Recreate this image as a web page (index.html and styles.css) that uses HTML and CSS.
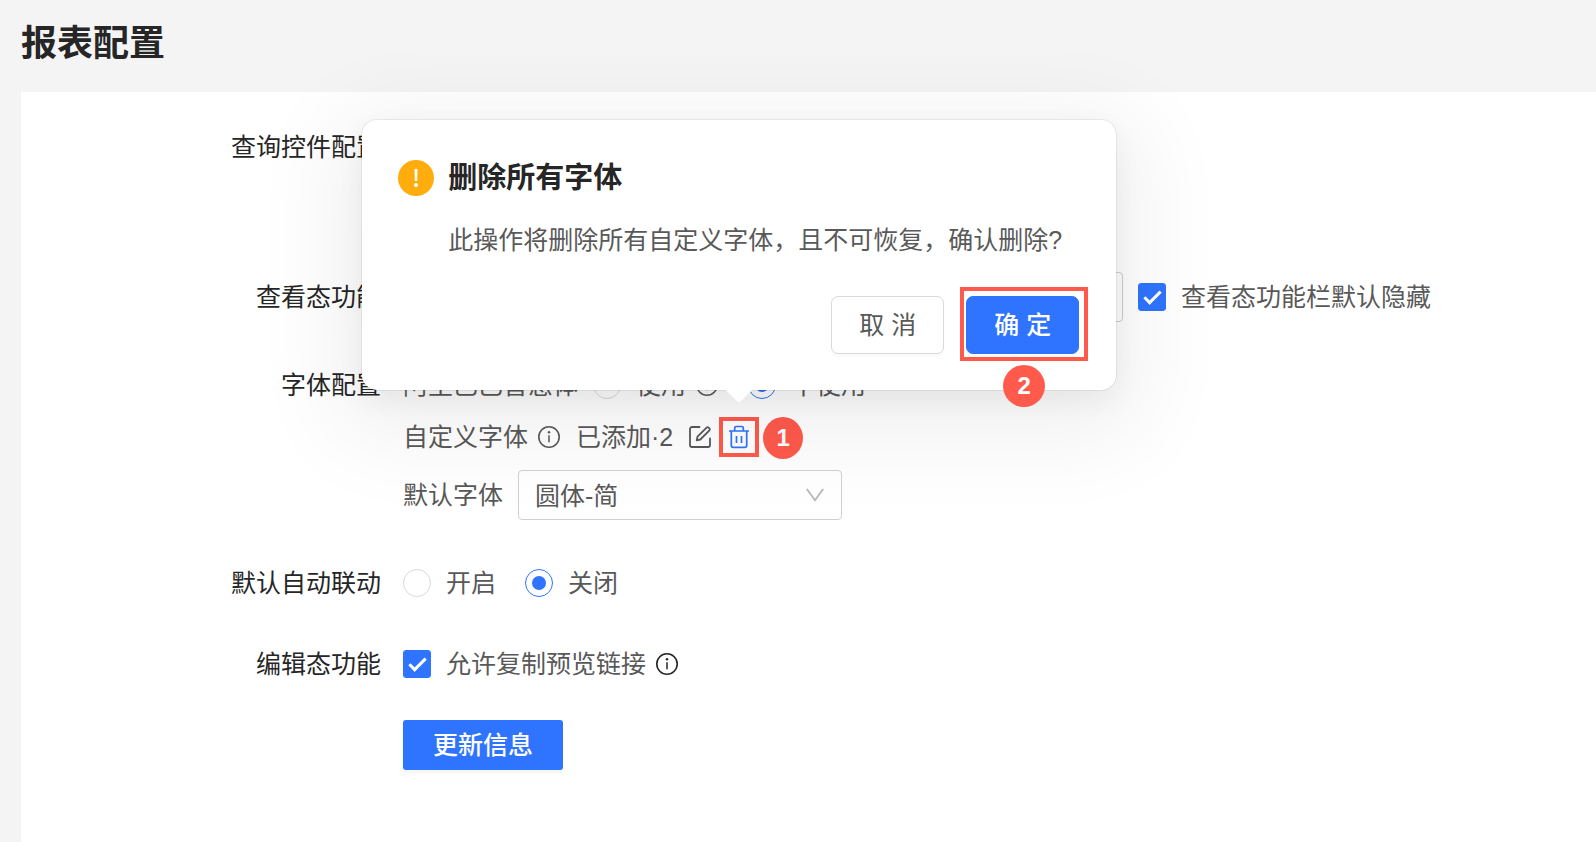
FILE: index.html
```html
<!DOCTYPE html>
<html lang="zh-CN">
<head>
<meta charset="utf-8">
<meta name="viewport" content="width=device-width, initial-scale=1">
<title>报表配置</title>
<link rel="stylesheet" href="styles.css">
</head>
<body>
<svg class="sprite" aria-hidden="true">
  <symbol id="icon-info" viewBox="0 0 24 24">
    <circle cx="12" cy="12" r="10.2" fill="none" stroke="currentColor" stroke-width="1.6"/>
    <path d="M12 10.3v7" fill="none" stroke="currentColor" stroke-width="1.5"/>
    <circle cx="12" cy="7.2" r="1.2" fill="currentColor"/>
  </symbol>
</svg>
<header class="page-header">
  <h1 class="page-title">报表配置</h1>
</header>
<main class="panel">
  <form class="form">
    <section class="row row-query">
      <h2 class="row-label">查询控件配置</h2>
      <div class="row-body"></div>
    </section>

    <section class="row row-spaced">
      <h2 class="row-label">查看态功能</h2>
      <div class="row-body">
        <div class="line line-wide">
          <input class="field view-field" type="text" aria-label="查看态功能">
          <label class="choice"><input class="checkbox" type="checkbox" checked>查看态功能栏默认隐藏</label>
        </div>
      </div>
    </section>

    <section class="row row-spaced">
      <h2 class="row-label">字体配置</h2>
      <div class="row-body">
        <div class="line">
          <span>阿里巴巴普惠体</span>
          <div class="choices">
            <span class="with-icon">
              <label class="choice"><input class="radio" type="radio" name="puhui">使用</label>
              <svg class="icon"><use href="#icon-info"/></svg>
            </span>
            <label class="choice"><input class="radio" type="radio" name="puhui" checked>不使用</label>
          </div>
        </div>
        <div class="line line-custom">
          <span class="with-icon">自定义字体<svg class="icon"><use href="#icon-info"/></svg></span>
          <span>已添加·2</span>
          <div class="actions">
            <button class="icon-button" type="button" aria-label="编辑">
              <svg class="icon" viewBox="0 0 24 24" fill="none" stroke="currentColor" stroke-width="1.8" stroke-linecap="round" stroke-linejoin="round">
                <path d="M11.5 2H4a2 2 0 0 0-2 2v16a2 2 0 0 0 2 2h16a2 2 0 0 0 2-2v-6.5"/>
                <path d="M9.5 11.7 18.6 2.6q1-.9 2 0l.8.8q.9 1 0 2l-9.1 9.1-3.6.8z"/>
              </svg>
            </button>
            <div class="trash marked">
              <button class="icon-button icon-button-active" type="button" aria-label="删除">
                <svg class="icon" viewBox="0 0 24 24" fill="none" stroke="currentColor" stroke-width="1.7" stroke-linejoin="round">
                  <path d="M2 6h20M7.700 6V3q0-1.500 1.500-1.500h5.600q1.500 0 1.500 1.500v3M4.300 6v14.500q0 1.800 1.800 1.800h11.800q1.800 0 1.800-1.800V6M9.500 11v7M14.500 11v7"/>
                </svg>
              </button>
              <div class="popover" role="dialog" aria-labelledby="confirm-title">
                <svg class="warning" viewBox="0 0 36 36" aria-hidden="true">
                  <circle cx="18" cy="18" r="18" fill="#ffad0d"/>
                  <path d="M16.500 9h3l-.3 12h-2.400z" fill="#fff"/>
                  <circle cx="18" cy="25" r="2" fill="#fff"/>
                </svg>
                <h3 id="confirm-title" class="popover-title">删除所有字体</h3>
                <p class="popover-text">此操作将删除所有自定义字体，且不可恢复，确认删除?</p>
                <div class="popover-actions">
                  <button class="button" type="button">取 消</button>
                  <div class="confirm">
                    <button class="button button-primary" type="button">确 定</button>
                    <span class="badge badge-below">2</span>
                  </div>
                </div>
              </div>
              <span class="badge badge-beside">1</span>
            </div>
          </div>
        </div>
        <div class="line line-select">
          <label for="default-font">默认字体</label>
          <div class="select">
            <select id="default-font" class="field select-field"><option>圆体-简</option></select>
            <svg class="chevron" viewBox="0 0 18 14" fill="none" stroke="currentColor" stroke-width="1.800"><path d="M.8 1 9 12.300 17.200 1"/></svg>
          </div>
        </div>
      </div>
    </section>

    <section class="row">
      <h2 class="row-label">默认自动联动</h2>
      <div class="row-body">
        <div class="line choices">
          <label class="choice"><input class="radio" type="radio" name="linkage">开启</label>
          <label class="choice"><input class="radio" type="radio" name="linkage" checked>关闭</label>
        </div>
      </div>
    </section>

    <section class="row">
      <h2 class="row-label">编辑态功能</h2>
      <div class="row-body">
        <div class="line">
          <span class="with-icon">
            <label class="choice"><input class="checkbox" type="checkbox" checked>允许复制预览链接</label>
            <svg class="icon icon-dark"><use href="#icon-info"/></svg>
          </span>
        </div>
      </div>
    </section>

    <div class="row">
      <button class="submit" type="submit">更新信息</button>
    </div>
  </form>
</main>
</body>
</html>
```
FILE: styles.css
```css
*,
*::before,
*::after {
  box-sizing: border-box;
}

body {
  margin: 0;
  min-height: 100vh;
  display: flex;
  flex-direction: column;
  overflow-x: hidden;
  background: #f4f4f4;
  color: #595959;
  font: 25px/50px "Liberation Sans", "Noto Sans CJK SC", sans-serif;
}

button,
input,
select {
  font: inherit;
  color: inherit;
  margin: 0;
}

h1,
h2,
h3,
p {
  margin: 0;
}

.sprite {
  display: none;
}

.page-header {
  padding: 17px 21px 21px;
}

.page-title {
  color: #262626;
  font-size: 36px;
  font-weight: 700;
  line-height: 54px;
}

.panel {
  flex: 1;
  margin-left: 21px;
  padding: 30px 0;
  background: #fff;
}

.form {
  display: flex;
  flex-direction: column;
  gap: 31px;
}

.row {
  display: grid;
  grid-template-columns: 360px 1fr;
  column-gap: 22px;
}

.row-query {
  min-height: 119px;
}

.row-spaced {
  margin-bottom: 7px;
}

.row-label {
  color: #262626;
  font-size: 25px;
  font-weight: 400;
  text-align: right;
}

.line {
  display: flex;
  align-items: center;
  gap: 15px;
  min-height: 50px;
  white-space: nowrap;
}

.line-custom {
  min-height: 54px;
}

.line-select {
  padding-top: 6px;
}

.choices {
  display: flex;
  gap: 29px;
}

.choice {
  display: flex;
  align-items: center;
  gap: 15px;
}

.with-icon {
  display: flex;
  align-items: center;
  gap: 9px;
}

.icon {
  display: block;
  flex: none;
  width: 24px;
  height: 24px;
}

.icon-dark {
  color: #262626;
}

.field {
  height: 50px;
  border: 1px solid #d0d0d0;
  border-radius: 4px;
  background: #fff;
}

.view-field {
  width: 720px;
}

.radio,
.checkbox {
  appearance: none;
  flex: none;
  display: grid;
  place-items: center;
  width: 28px;
  height: 28px;
  border: 1px solid #d9d9d9;
  background: #fff;
}

.radio {
  border-radius: 50%;
}

.radio:checked {
  border-color: #2f74ff;
}

.radio:checked::after {
  content: "";
  width: 14px;
  height: 14px;
  border-radius: 50%;
  background: #2f74ff;
}

.checkbox {
  border-radius: 3px;
}

.checkbox:checked {
  border-color: #2f74ff;
  background: #2f74ff;
}

.checkbox:checked::after {
  content: "";
  width: 9px;
  height: 17px;
  border: solid #fff;
  border-width: 0 3px 3px 0;
  transform: translateY(-2px) rotate(45deg);
}

.actions {
  display: flex;
  align-items: center;
  gap: 7px;
}

.icon-button {
  display: grid;
  place-items: center;
  padding: 0;
  border: 0;
  background: none;
}

.icon-button-active {
  color: #2f74ff;
}

.trash {
  position: relative;
  display: grid;
  place-items: center;
  width: 40px;
  height: 40px;
}

.marked {
  border: 4px solid #ff5a4c;
}

.badge {
  position: absolute;
  display: grid;
  place-items: center;
  width: 42px;
  height: 42px;
  border-radius: 50%;
  background: #ff5a4c;
  color: #fff;
  font-size: 24px;
  font-weight: 700;
  line-height: 42px;
}

.badge-beside {
  top: -4px;
  left: 40px;
  width: 40px;
}

.badge-below {
  top: 69px;
  left: 37px;
}

.popover {
  position: absolute;
  z-index: 1;
  right: -361px;
  bottom: calc(100% + 31px);
  display: grid;
  grid-template-columns: 36px 1fr;
  align-items: center;
  column-gap: 14px;
  width: 754px;
  padding: 36px 37px 36px 36px;
  border-radius: 15px;
  background: #fff;
  box-shadow: 0 0 0 1px rgba(0, 0, 0, 0.06), 0 10px 28px rgba(0, 0, 0, 0.06), 0 22px 90px 28px rgba(0, 0, 0, 0.06);
}

.popover::after {
  content: "";
  position: absolute;
  left: calc(50% - 10px);
  bottom: -9px;
  width: 20px;
  height: 20px;
  border-radius: 2px;
  background: #fff;
  transform: rotate(45deg);
}

.warning {
  width: 36px;
  height: 36px;
}

.popover-title {
  color: #262626;
  font-size: 29px;
  font-weight: 700;
  line-height: 44px;
}

.popover-text {
  grid-column: 2;
  margin-top: 20px;
  line-height: 40px;
}

.popover-actions {
  grid-column: 2;
  display: flex;
  justify-content: flex-end;
  gap: 22px;
  margin-top: 36px;
}

.button {
  width: 113px;
  height: 58px;
  padding: 0;
  border: 1px solid #d9d9d9;
  border-radius: 7px;
  background: #fff;
  box-shadow: 0 3px 0 rgba(0, 0, 0, 0.015);
}

.button-primary {
  border-color: #2f74ff;
  background: #2f74ff;
  color: #fff;
  font-weight: 500;
}

.confirm {
  position: relative;
  display: flex;
}

.confirm::before {
  content: "";
  position: absolute;
  inset: -9px -9px -7px -6px;
  border: 4px solid #ff5a4c;
}

.select {
  position: relative;
  color: #595959;
}

.select-field {
  appearance: none;
  display: block;
  width: 324px;
  padding: 0 48px 0 16px;
}

.chevron {
  position: absolute;
  right: 18px;
  top: 18px;
  width: 18px;
  height: 14px;
  color: #b8b8b8;
  pointer-events: none;
}

.submit {
  grid-column: 2;
  justify-self: start;
  width: 160px;
  height: 50px;
  padding: 0;
  border: 0;
  border-radius: 3px;
  background: #2f74ff;
  box-shadow: 0 3px 0 rgba(0, 0, 0, 0.03);
  color: #fff;
  font-weight: 500;
}
```
